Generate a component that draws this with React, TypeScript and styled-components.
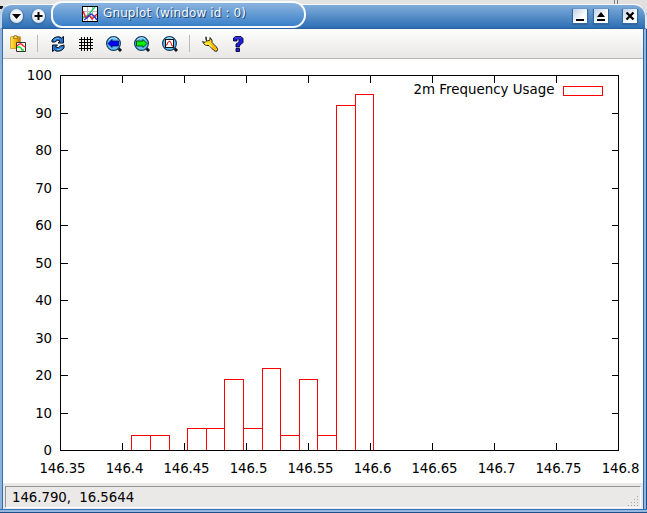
import React from 'react';
import styled, { createGlobalStyle } from 'styled-components';

const GlobalStyle = createGlobalStyle`
  body { margin: 0; background: #e3e3e3; overflow: hidden; font-family: "DejaVu Sans", sans-serif; }
`;

const Desktop = styled.div`
  width: 647px;
  height: 513px;
  box-sizing: border-box;
  padding-top: 4px;
  background:
    linear-gradient(#111, #111) 0 6px / 3px 3px no-repeat,
    linear-gradient(90deg, #e3e3e3 614px, #858585 614px 615px, #e3e3e3 615px 617px, #777 617px 618px, #e3dfde 618px);
`;

const Window = styled.div`
  height: 509px;
  box-sizing: border-box;
  display: flex;
  flex-direction: column;
  border-radius: 11px 13px 0 0;
  background: linear-gradient(90deg, #8fb2dc 0 2px, #2d6fb5 2px 3px, #ebe9e8 3px 643px, #2b65a4 643px 644px, #91b6df 644px 646px, #1f5288 646px);
`;

const TitleBar = styled.header`
  height: 25px;
  flex: none;
  box-sizing: border-box;
  display: flex;
  align-items: center;
  padding: 1px 8px 0 9px;
  border-top: 1px solid #f7fafd;
  border-left: 2px solid #c0d4eb;
  border-right: 2px solid #e2ebf5;
  border-bottom: 1px solid #285f9e;
  border-radius: 11px 13px 0 0;
  background: linear-gradient(#80acd9, #2c6fb5);
`;

const RoundButton = styled.button`
  width: 13px;
  height: 14px;
  flex: none;
  margin: 0 9px 2px 0;
  padding: 0;
  border: 0;
  border-radius: 50%;
  background: radial-gradient(circle at 50% 45%, #fff 0 20%, #e4ebf2 60%, #c7d4e2);
  box-shadow: 0 1px 1px 1px #386da4;
  margin-left: -1px;
  & + & { margin-left: 0; }
  svg { display: block; }
`;

const TitleTab = styled.div`
  width: 255px;
  height: 27px;
  flex: none;
  box-sizing: border-box;
  display: flex;
  align-items: center;
  gap: 5px;
  padding-left: 29px;
  margin: -6px auto 0 -3px;
  border: 2px solid #f8fbfe;
  border-radius: 11px 13px 13px 11px;
  background: linear-gradient(#8bb4df, #3980c9);
`;

const Title = styled.span`
  color: #f4f8fc;
  font-size: 12px;
  line-height: 16px;
  letter-spacing: .12px;
  margin-top: -2px;
  white-space: pre;
  text-shadow: 1px 1px 0 #1f446d;
`;

const SquareButton = styled.button<{ $gap: number }>`
  width: 14px;
  height: 14px;
  flex: none;
  margin: 0 0 2px ${p => p.$gap}px;
  padding: 0;
  border: 0;
  background: linear-gradient(135deg, #bfd1e6, #fff 65%);
  box-shadow: 0 1px 1px 1px #3468a0;
  svg { display: block; }
`;

const ToolBar = styled.nav`
  height: 30px;
  flex: none;
  box-sizing: border-box;
  display: flex;
  align-items: center;
  margin: 0 4px 0 3px;
  padding-left: 7px;
  border-bottom: 1px solid #bcbab8;
  background: linear-gradient(#fefefe, #e9e7e5);
`;

const Tool = styled.button<{ $after?: number }>`
  width: 16px;
  height: 16px;
  flex: none;
  padding: 0;
  border: 0;
  background: none;
  margin-right: ${p => p.$after ?? 12}px;
  svg { display: block; overflow: visible; }
`;

const Separator = styled.i`
  width: 1px;
  height: 17px;
  margin-right: 12px;
  background: #bdbbb9;
`;

const Plot = styled.main`
  height: 424px;
  flex: none;
  margin: 0 4px 0 3px;
  background: #fff;
  svg { display: block; }
  text { font: 13.33px "DejaVu Sans", sans-serif; letter-spacing: -.1px; fill: #000; }
  text.legend { font-size: 13.4px; letter-spacing: 0; }
`;

const StatusBar = styled.footer`
  flex: 1;
  box-sizing: border-box;
  margin: 0 4px 0 3px;
  padding: 3px 2px 1px;
  background: #ebe9e8;
`;

const StatusField = styled.div`
  height: 22px;
  box-sizing: border-box;
  display: flex;
  justify-content: space-between;
  align-items: flex-end;
  border: 1px solid #979593;
  border-right-color: #fff;
  border-bottom-color: #fff;
  padding: 0 1px 0 6px;
  font-size: 13.33px;
  letter-spacing: -.05px;
  line-height: 19px;
  white-space: pre;
`;

const BottomEdge = styled.div`
  height: 4px;
  flex: none;
  background: linear-gradient(#2f75bd 0 1px, #97b9df 1px 3px, #1d508b 3px);
`;

function PlotIcon() {
  return (
    <svg width="16" height="16" viewBox="0 0 16 16" shapeRendering="crispEdges">
      <path fill="#fff" stroke="#000" d="M.5.5h15v15H.5z" />
      <path fill="none" stroke="#bbb" d="M5.5 1v14M10.5 1v14M1 5.5h14M1 10.5h14" />
      <g fill="none" shapeRendering="auto" strokeWidth="1.4">
        <path stroke="#18d668" d="M1 12C7 10 8 6 13 1" />
        <path stroke="#f01830" d="M1 5l3 7 3-3 3 4 5-5" />
        <path stroke="#2838d8" d="M2 14l3-2 4-4 3 2 3 4" />
      </g>
    </svg>
  );
}

function CopyIcon() {
  return (
    <svg width="16" height="16" viewBox="0 0 16 16">
      <defs>
        <linearGradient id="board"><stop stopColor="#ffe860" /><stop offset=".55" stopColor="#f2b30a" /><stop offset="1" stopColor="#b87300" /></linearGradient>
      </defs>
      <path fill="url(#board)" stroke="#c98c12" strokeWidth=".7" d="M.5 1.5q0-1 1-1h8q1 0 1 1v11h-10z" />
      <path fill="#f0d56a" stroke="#8d6514" strokeWidth=".7" d="M3.5 2.5v-2h1v-1h2v1h1v2z" />
      <path fill="#fff" stroke="#333" d="M6.5 6.5h9v9h-9z" />
      <path fill="none" stroke="#f22" strokeWidth="1.5" d="M7 10q3-4 6-.5l2 1.5" />
      <path fill="none" stroke="#1cdc1c" strokeWidth="1.5" d="M7 11h2q2 0 3 3h2" />
    </svg>
  );
}

function RefreshIcon() {
  return (
    <svg width="16" height="16" viewBox="0 0 16 16" fill="#2674cf" stroke="#05111e" strokeLinejoin="round">
      <path d="M2 6V4q2-3 5.5-3.3 3 0 4 1.3l2-1.5V7H8l2-2q-3-2-5 1z" />
      <path d="M14 9v3q-2 3-5.5 3.3-3 0-4-1.3l-2 1.5V9h5l-2 2q3 2 5-1z" />
      <path fill="none" stroke="#79bdfa" d="M4 4.5q2-3 5-2M12 11.5q-2 3-5 2" />
    </svg>
  );
}

function GridIcon() {
  return (
    <svg width="16" height="16" viewBox="0 0 16 16" shapeRendering="crispEdges">
      <path stroke="#000" fill="none" d="M3.5 1v14M6.5 1v14M9.5 1v14M12.5 1v14M1 3.5h14M1 6.5h14M1 9.5h14M1 12.5h14" />
    </svg>
  );
}

function LensIcon({ kind }: { kind: 'previous' | 'next' | 'auto' }) {
  return (
    <svg width="16" height="16" viewBox="0 0 16 16">
      <path stroke="#101820" strokeWidth="3" d="M12 12l3 3" />
      <circle cx="7.5" cy="7.5" r="6.9" fill="#62bdf4" stroke="#173c5b" strokeWidth="1.2" />
      <path fill="none" stroke="#b0e4ff" d="M3 4q4-4 8-1" />
      {kind === 'previous' && <path fill="#0000ff" stroke="#000345" strokeWidth=".7" d="M2 7.5l4-4V5h6.5v5H6v1.5z" />}
      {kind === 'next' && <path fill="#00f000" stroke="#002b00" strokeWidth=".8" d="M13 7.5l-4-4V5H2.5v5H9v1.5z" />}
      {kind === 'auto' && (
        <>
          <path fill="#fff" stroke="#111" shapeRendering="crispEdges" d="M3.5 3.5h8v8h-8z" />
          <path fill="none" stroke="#f11" d="M4 9h1l1-3 2-1 1 2 1 3h1" />
        </>
      )}
    </svg>
  );
}

function WrenchIcon() {
  return (
    <svg width="16" height="16" viewBox="0 0 16 16">
      <path fill="#8d8b88" opacity=".45" d="M2 9h5l6 7h2v-3L8 6z" />
      <path fill="#ffd51a" stroke="#171204" strokeWidth=".9" strokeLinejoin="round" d="M4 .8L4 3.5l1.5 1.5L8 4V1.5q3 2.500 2 5l4.500 4.500q2 2.500.500 4-1.500 1-3.500-1L7 9.500Q2 10 .6 5.500L3 6.500l1.500-1.500z" />
      <path fill="#ffac08" d="M8 8l1.500-.5 5 5q0 2-2 1z" />
      <path fill="none" stroke="#fff04a" strokeWidth="1.5" d="M3 7.500l4 .5 3 3" />
    </svg>
  );
}

function HelpIcon() {
  return (
    <svg width="16" height="16" viewBox="0 0 16 16" fill="#1d1bdf" stroke="#08062f" strokeWidth=".9" strokeLinejoin="round">
      <path d="M3.5 5V2l2-1.5H11L13 2.5v4l-2 2-1.5 1V11H6V8l3-2V3H7v2z" />
      <path d="M6 12.5h3.5v3H6z" />
      <path fill="none" stroke="#5753ff" d="M5 2h6" />
    </svg>
  );
}

const EDGES = [131, 150, 169, 187, 206, 224, 243, 262, 280, 299, 317, 336, 355, 373];
const TOPS = [435, 435, null, 428, 428, 379, 428, 368, 435, 379, 435, 105, 94];
const X_LABELS = ['146.35', '146.4', '146.45', '146.5', '146.55', '146.6', '146.65', '146.7', '146.75', '146.8'];
const Y_LABELS = [0, 10, 20, 30, 40, 50, 60, 70, 80, 90, 100];

function Histogram() {
  return (
    <svg width="640" height="424" viewBox="3 59 640 424">
      <g fill="none" stroke="#000" shapeRendering="crispEdges">
        <path d="M60.5 75.5h558v375h-558z" />
        {X_LABELS.map((label, i) => (
          <path key={label} d={`M${60.5 + 62 * i} 75v8M${60.5 + 62 * i} 451v-8`} />
        ))}
        {Y_LABELS.map(value => {
          const y = Math.round(450 - value * 3.75) + .5;
          return <path key={value} d={`M60 ${y}h8M619 ${y}h-7`} />;
        })}
      </g>
      <g fill="none" stroke="#ff0000" shapeRendering="crispEdges">
        {TOPS.map((top, i) => top !== null && (
          <path key={i} d={`M${EDGES[i] + .5} 450V${top + .5}H${EDGES[i + 1] + .5}V450`} />
        ))}
        <path d="M563.5 86.5h39v9h-39z" />
      </g>
      {X_LABELS.map((label, i) => (
        <text key={label} x={62.5 + i * 62} y="473" textAnchor="middle">{label}</text>
      ))}
      {Y_LABELS.map(value => (
        <text key={value} x="52" y={Math.round(455 - value * 3.75)} textAnchor="end">{value}</text>
      ))}
      <text className="legend" x="554.5" y="94" textAnchor="end">2m Frequency Usage</text>
    </svg>
  );
}

function SizeGrip() {
  const dots = [[9, 1], [6, 4], [9, 4], [3, 7], [6, 7], [9, 7], [0, 10], [3, 10], [6, 10], [9, 10]];
  return (
    <svg width="11" height="12" shapeRendering="crispEdges">
      {dots.map(([x, y]) => <path key={`${x}-${y}`} fill="#aaa8a6" d={`M${x} ${y}h1v1h-1z`} />)}
    </svg>
  );
}

export default function App() {
  return (
    <Desktop>
      <GlobalStyle />
      <Window>
        <TitleBar>
          <RoundButton aria-label="Window menu"><svg width="13" height="14"><path d="M2 5h9l-4.5 5z" /></svg></RoundButton>
          <RoundButton aria-label="All desktops"><svg width="13" height="14"><path stroke="#000" strokeWidth="2" d="M6.5 3v8M2.5 7h8" /></svg></RoundButton>
          <TitleTab><PlotIcon /><Title>Gnuplot (window id : 0)</Title></TitleTab>
          <SquareButton $gap={0} aria-label="Minimize"><svg width="14" height="14"><path d="M3 10h8v2H3z" /></svg></SquareButton>
          <SquareButton $gap={7} aria-label="Maximize"><svg width="14" height="14"><path d="M3 8l4-5 4 5zM3 10h8v2H3z" /></svg></SquareButton>
          <SquareButton $gap={15} aria-label="Close"><svg width="14" height="14"><path stroke="#000" strokeWidth="2.3" d="M3.5 3.5l7 7M10.5 3.5l-7 7" /></svg></SquareButton>
        </TitleBar>
        <ToolBar>
          <Tool $after={11} aria-label="Copy"><CopyIcon /></Tool>
          <Separator />
          <Tool aria-label="Replot"><RefreshIcon /></Tool>
          <Tool aria-label="Toggle grid"><GridIcon /></Tool>
          <Tool aria-label="Previous zoom"><LensIcon kind="previous" /></Tool>
          <Tool aria-label="Next zoom"><LensIcon kind="next" /></Tool>
          <Tool $after={11} aria-label="Autoscale"><LensIcon kind="auto" /></Tool>
          <Separator />
          <Tool aria-label="Configure"><WrenchIcon /></Tool>
          <Tool aria-label="Help"><HelpIcon /></Tool>
        </ToolBar>
        <Plot><Histogram /></Plot>
        <StatusBar><StatusField><span>146.790,  16.5644</span><SizeGrip /></StatusField></StatusBar>
        <BottomEdge />
      </Window>
    </Desktop>
  );
}
